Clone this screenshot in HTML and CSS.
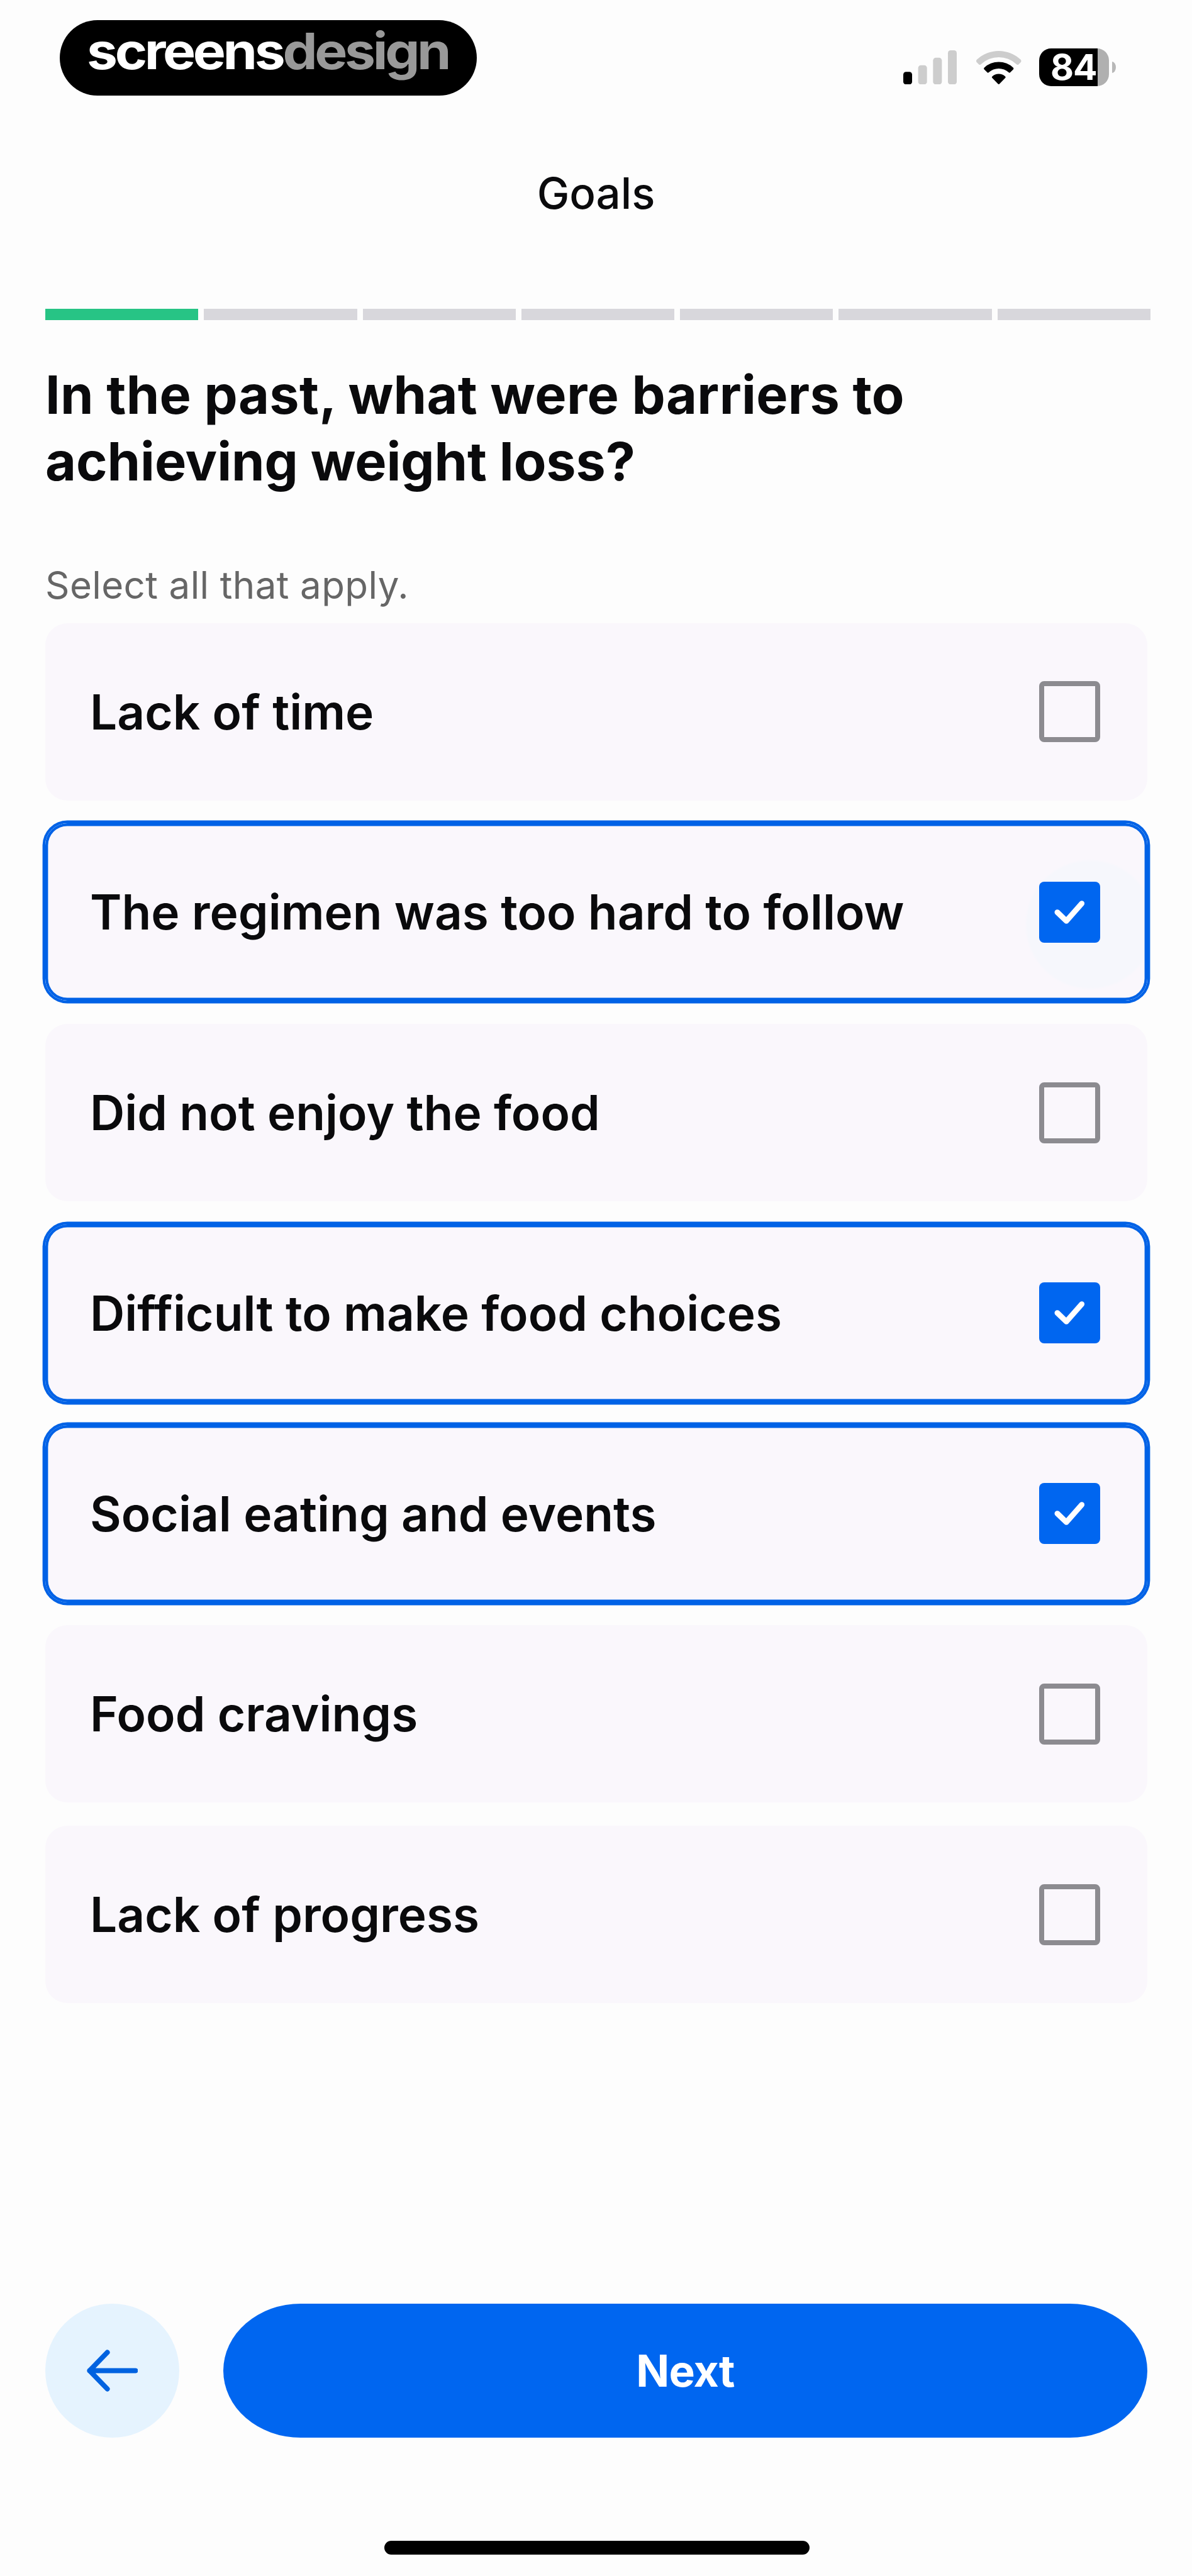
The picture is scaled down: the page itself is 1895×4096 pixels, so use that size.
FILE: index.html
```html
<!DOCTYPE html>
<html lang="en">
<head>
<meta charset="utf-8">
<title>Goals</title>
<link rel="stylesheet" href="styles.css">
</head>
<body>
<div class="screen">
  <header class="status">
    <div class="brand"><div class="brand-name"><span class="brand-a">screens</span><span class="brand-b">design</span></div></div>
    <div class="indicators">
      <svg class="signal" viewBox="0 0 97 62">
        <rect x="0" y="39" width="16" height="23" rx="5" fill="#000"/>
        <rect x="27" y="27" width="16" height="35" rx="5" fill="#cdcdcd"/>
        <rect x="54" y="13.500" width="16" height="48.500" rx="5" fill="#cdcdcd"/>
        <rect x="81" y="0" width="16" height="62" rx="5" fill="#cdcdcd"/>
      </svg>
      <svg class="wifi" viewBox="0 0 84 62">
        <path d="M2.500 16.500Q0 19 2 21.500L6 25.500Q8 27 10 25A47 47 0 0 1 74 25Q76 27 78 25.500L82 21.500Q84 19 81.500 16.500A58 58 0 0 0 2.500 16.500Z" fill="#cdcdcd"/>
        <path d="M15.500 31.500Q14.300 33 15.500 34.500L21 40Q22.500 41.500 24 40A27 27 0 0 1 60 40Q61.500 41.500 63 40L68.500 34.500Q69.700 33 68.500 31.500A38.500 38.500 0 0 0 15.500 31.500Z" fill="#000"/>
        <path d="M30 47.500Q29 49 30 50L40.500 60.800Q42 62.300 43.500 60.800L54 50Q55 49 54 47.500A18 18 0 0 0 30 47.500Z" fill="#000"/>
      </svg>
      <div class="battery">
        <div class="battery-body"><span class="battery-level">84</span></div>
        <div class="battery-tip"></div>
      </div>
    </div>
  </header>

  <h1 class="title">Goals</h1>

  <div class="progress">
    <i class="step done"></i><i class="step"></i><i class="step"></i><i class="step"></i><i class="step"></i><i class="step"></i><i class="step"></i>
  </div>

  <h2 class="question">In the past, what were barriers to<br><span class="question-end">achieving weight loss?</span></h2>
  <p class="hint">Select all that apply.</p>

  <main class="options">
    <div class="option"><span>Lack of time</span><i class="box"></i></div>
    <div class="option selected touched"><span>The regimen was too hard to follow</span><i class="box"><svg viewBox="0 0 111 111"><path d="M33 55.500L49.500 71.500L77.500 39.500"/></svg></i></div>
    <div class="option"><span>Did not enjoy the food</span><i class="box"></i></div>
    <div class="option selected"><span>Difficult to make food choices</span><i class="box"><svg viewBox="0 0 111 111"><path d="M33 55.500L49.500 71.500L77.500 39.500"/></svg></i></div>
    <div class="option selected"><span>Social eating and events</span><i class="box"><svg viewBox="0 0 111 111"><path d="M33 55.500L49.500 71.500L77.500 39.500"/></svg></i></div>
    <div class="option"><span>Food cravings</span><i class="box"></i></div>
    <div class="option"><span>Lack of progress</span><i class="box"></i></div>
  </main>

  <footer class="actions">
    <button class="back" aria-label="Back"><svg viewBox="0 0 92 76"><path d="M88 38H5M37 5L5 38L37 71"/></svg></button>
    <button class="next">Next</button>
  </footer>
  <div class="home-bar"></div>
</div>
</body>
</html>
```
FILE: styles.css
```css
* { box-sizing: border-box; }

body {
  margin: 0;
  background: #fdfdfd;
  color: #0a0a0c;
  font-family: Inter, "Liberation Sans", sans-serif;
}

.screen {
  display: flex;
  flex-direction: column;
  width: 1895px;
  height: 4096px;
  padding: 32px 71px 34px 71px;
  overflow: hidden;
}

.status {
  display: flex;
  justify-content: space-between;
  align-items: flex-start;
  height: 120px;
  padding: 0 50px 0 24px;
}

.brand {
  width: 663px;
  height: 120px;
  padding-left: 43px;
  border-radius: 60px;
  background: #000;
  color: #fff;
  font-size: 80px;
  font-weight: 700;
  line-height: 97px;
  letter-spacing: -4px;
  white-space: nowrap;
}

.brand-name {
  width: max-content;
  transform: scaleX(1.095);
  transform-origin: left;
}

.brand-b { color: #999; }

.indicators {
  display: flex;
  align-items: center;
  margin-top: 45px;
  height: 60px;
}

.signal { width: 85px; height: 54.400px; margin-right: 30px; }
.wifi { width: 73.500px; height: 54.400px; margin-right: 28px; }

.battery { display: flex; align-items: center; gap: 5px; }

.battery-body {
  width: 111px;
  height: 60px;
  border-radius: 19px;
  background: linear-gradient(90deg, #000 93px, #b0b0b0 93px);
}

.battery-level {
  display: block;
  padding-left: 18px;
  color: #fff;
  font-size: 57px;
  font-weight: 700;
  line-height: 60px;
  letter-spacing: -1px;
}

.battery-tip {
  width: 6px;
  height: 18px;
  border-radius: 0 6px 6px 0 / 0 9px 9px 0;
  background: #b8b8b8;
}

.title {
  margin: 113px 0 0;
  font-size: 69px;
  font-weight: 450;
  line-height: 84px;
  text-align: center;
}

.progress {
  display: flex;
  gap: 9px;
  width: 1757px;
  height: 18px;
  margin: 142px 0 0 1px;
}

.step { flex: 1; background: #d8d7dc; }
.step.done { background: #27c485; }

.question {
  margin: 66px 0 0 1px;
  font-size: 84.500px;
  font-weight: 650;
  line-height: 105.600px;
  letter-spacing: 0.300px;
  white-space: nowrap;
}

.question-end { letter-spacing: -0.100px; }

.hint {
  margin: 108px 0 0 1px;
  color: #666;
  font-size: 60px;
  line-height: 72px;
  letter-spacing: 0.400px;
  white-space: nowrap;
}

.options {
  display: flex;
  flex-direction: column;
  gap: 36.750px;
  width: 1751.500px;
  margin: 24.500px 0 0 1px;
}

.option {
  display: flex;
  flex: none;
  align-items: center;
  justify-content: space-between;
  height: 282px;
  padding: 0 75px 0 71px;
  border-radius: 35px;
  background: #faf7fc;
  font-size: 76.500px;
  font-weight: 600;
  font-variant-ligatures: none;
  white-space: nowrap;
}

.option.selected {
  box-shadow: 0 0 0 4.400px #0062e6, inset 0 0 0 4.400px #0062e6;
}

.option.touched {
  background: radial-gradient(circle 104px at 1661px 161px, #f6f7fc 96%, #faf7fc);
}

.box {
  width: 97px;
  height: 97px;
  border: 8px solid #8c8b90;
  border-radius: 8px;
}

.selected .box { border: 0; background: #0066f0; }
.box svg { display: block; width: 97px; height: 97px; }

.box path {
  fill: none;
  stroke: #fff;
  stroke-width: 10;
  stroke-linecap: round;
  stroke-linejoin: round;
}

.actions {
  display: flex;
  justify-content: space-between;
  width: 1752px;
  height: 213px;
  margin: auto 0 0 1px;
}

button { border: 0; padding: 0; font-family: inherit; }

.back {
  display: flex;
  align-items: center;
  justify-content: center;
  width: 213px;
  height: 213px;
  border-radius: 50%;
  background: #e5f3fe;
}

.back svg { width: 81px; height: 67px; }

.back path {
  fill: none;
  stroke: #0062e0;
  stroke-width: 9;
  stroke-linecap: round;
  stroke-linejoin: round;
}

.next {
  width: 1469px;
  border-radius: 123px / 106.500px;
  background: #0066f0;
  color: #fff;
  font-size: 69.500px;
  font-weight: 700;
  letter-spacing: -0.800px;
}

.home-bar {
  width: 676px;
  height: 22px;
  margin: 164px 0 0 540px;
  border-radius: 11px;
  background: #000;
}
```
